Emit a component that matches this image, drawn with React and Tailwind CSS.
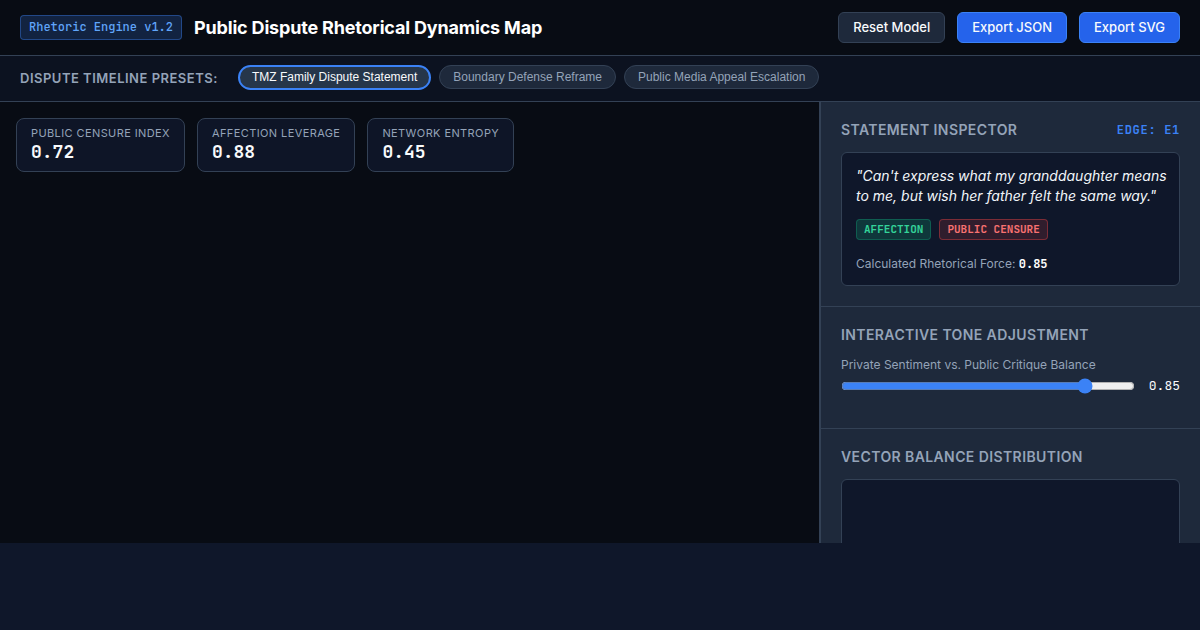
import { useState } from 'react'
import { clsx } from 'clsx'

const PRESETS = [
  { id: 'tmz', label: 'TMZ Family Dispute Statement' },
  { id: 'boundary', label: 'Boundary Defense Reframe' },
  { id: 'appeal', label: 'Public Media Appeal Escalation' },
]

const METRICS = [
  { label: 'Public Censure Index', value: '0.72' },
  { label: 'Affection Leverage', value: '0.88' },
  { label: 'Network Entropy', value: '0.45' },
]

const MONO = "font-['JetBrains_Mono','Liberation_Mono',monospace]"

function Button({ primary, children }) {
  return (
    <button
      type="button"
      className={clsx(
        'rounded-md border px-3.5 py-1.5 text-[13px] leading-[17px] font-medium transition-colors',
        primary
          ? 'border-[#3b82f6] bg-[#2563eb] text-[#f8fafc] hover:bg-[#1d4ed8]'
          : 'border-[#334155] bg-[#1e293b] text-[#f8fafc] hover:bg-[#334155]'
      )}
    >
      {children}
    </button>
  )
}

function Header() {
  return (
    <header className="flex items-center justify-between border-b border-[#334155] bg-[#080c14] px-5 py-3">
      <div className="flex items-center gap-3">
        <span className={`${MONO} rounded border border-[#3b82f6]/40 bg-[#3b82f6]/20 px-2 py-1 text-xs leading-[15px] font-medium text-[#60a5fa]`}>
          Rhetoric Engine v1.2
        </span>
        <h1 className="text-lg leading-6 font-bold tracking-[-0.01em] text-white">
          Public Dispute Rhetorical Dynamics Map
        </h1>
      </div>
      <div className="flex gap-3">
        <Button>Reset Model</Button>
        <Button primary>Export JSON</Button>
        <Button primary>Export SVG</Button>
      </div>
    </header>
  )
}

function PresetBar() {
  const [active, setActive] = useState('tmz')

  return (
    <nav className="flex items-start gap-5 border-b border-[#334155] bg-[#0c1220] px-5 pt-[9px] pb-[11px]">
      <span className="pt-[3px] text-[13px] leading-5 font-semibold tracking-[0.5px] text-[#94a3b8] uppercase">
        Dispute Timeline Presets:
      </span>
      <div className="flex items-start gap-2">
        {PRESETS.map(({ id, label }) => (
          <button
            key={id}
            type="button"
            onClick={() => setActive(id)}
            className={clsx(
              "rounded-full font-['Liberation_Sans',Arial,sans-serif] text-xs",
              id === active
                ? 'border-2 border-[#3b82f6] bg-[#26364a] px-3 pt-0.5 pb-[3px] leading-4 text-[#f8fafc]'
                : 'border border-[#334155] bg-[#1e293b] px-[13px] py-0.5 leading-[18px] text-[#94a3b8]'
            )}
          >
            {label}
          </button>
        ))}
      </div>
    </nav>
  )
}

function Metric({ label, value }) {
  return (
    <div className="rounded-lg border border-[#334155] bg-[#0f172a]/85 px-3.5 py-2">
      <div className="text-[11px] leading-[13px] tracking-[0.4px] text-[#94a3b8] uppercase">{label}</div>
      <div className={`${MONO} text-lg leading-[23px] font-bold text-[#f8fafc]`}>{value}</div>
    </div>
  )
}

function Section({ title, aside, children }) {
  return (
    <section className="border-b border-[#334155] p-5">
      <h2 className="mb-3.5 flex items-center justify-between text-sm leading-4 font-semibold tracking-[0.4px] text-[#94a3b8] uppercase">
        {title}
        {aside && (
          <span className={`${MONO} text-xs leading-4 font-semibold tracking-[0.7px] text-[#3b82f6]`}>{aside}</span>
        )}
      </h2>
      {children}
    </section>
  )
}

function Tag({ className, children }) {
  return (
    <span className={clsx(MONO, 'rounded border px-[7px] py-0.5 text-[11px] leading-[15px] font-semibold uppercase', className)}>
      {children}
    </span>
  )
}

function Inspector() {
  const [tone, setTone] = useState(0.85)

  return (
    <aside className="overflow-hidden border-l-2 border-[#334155] bg-[#1e293b]">
      <Section title="Statement Inspector" aside="Edge: E1">
        <div className="rounded-md border border-[#334155] bg-[#0f172a] py-[13px] pr-3 pl-3.5">
          <p className="mb-[13px] text-sm leading-5 text-[#f1f5f9] italic">
            "Can't express what my granddaughter means to me, but wish her father felt the same way."
          </p>
          <div className="mb-4 flex gap-2">
            <Tag className="border-[#10b981]/30 bg-[#10b981]/20 text-[#34d399]">Affection</Tag>
            <Tag className="border-[#ef4444]/40 bg-[#ef4444]/15 text-[#f87171]">Public Censure</Tag>
          </div>
          <p className="text-xs leading-[15px] text-[#94a3b8]">
            Calculated Rhetorical Force: <strong className={`${MONO} font-bold text-white`}>{tone.toFixed(2)}</strong>
          </p>
        </div>
      </Section>

      <Section title="Interactive Tone Adjustment">
        <label htmlFor="tone" className="block pb-1.5 text-xs leading-[15px] text-[#94a3b8]">
          Private Sentiment vs. Public Critique Balance
        </label>
        <div className="mb-3.5 flex h-4 items-center gap-3.5">
          <input
            id="tone"
            type="range"
            min="0"
            max="1"
            step="0.01"
            value={tone}
            onChange={(e) => setTone(Number(e.target.value))}
            className="min-w-0 flex-1 accent-[#3b82f6]"
          />
          <output htmlFor="tone" className={`${MONO} text-[13px] leading-4 text-[#f8fafc]`}>
            {tone.toFixed(2)}
          </output>
        </div>
      </Section>

      <Section title="Vector Balance Distribution">
        <div className="h-45 rounded-md border border-[#334155] bg-[#0f172a]" />
      </Section>
    </aside>
  )
}

export default function App() {
  return (
    <div className="min-h-screen bg-[#0f172a] font-[Inter,sans-serif] text-[#f8fafc]">
      <Header />
      <PresetBar />
      <main className="grid h-[70vh] grid-cols-[1fr_381px] overflow-hidden">
        {/* Map canvas */}
        <div className="flex items-start gap-3 bg-[#080c14] p-4">
          {METRICS.map((m) => (
            <Metric key={m.label} {...m} />
          ))}
        </div>
        <Inspector />
      </main>
    </div>
  )
}
